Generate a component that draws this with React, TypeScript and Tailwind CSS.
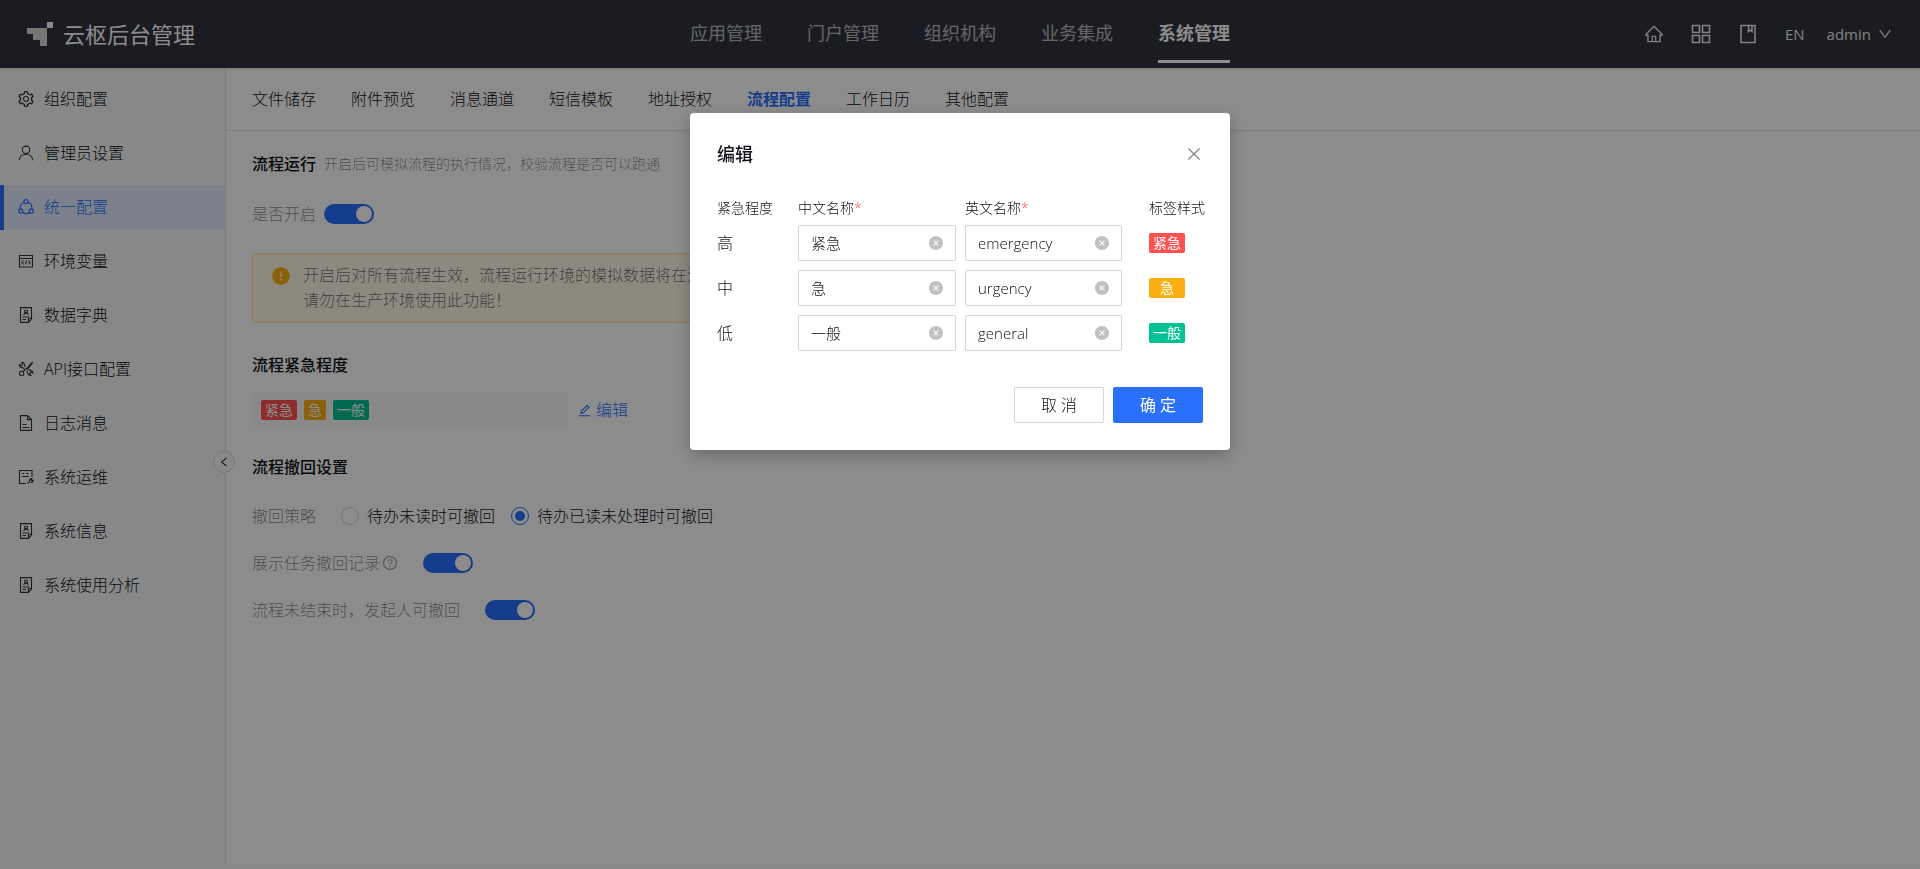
import React from "react";
import {
  AiOutlineSetting,
  AiOutlineHome,
  AiOutlineDown,
  AiOutlineLeft,
  AiOutlineEdit,
  AiOutlineQuestionCircle,
  AiOutlineClose,
  AiFillCloseCircle,
  AiFillExclamationCircle,
} from "react-icons/ai";

type IconProps = { className?: string };

const line = {
  fill: "none",
  stroke: "currentColor",
  strokeWidth: 1.1,
  viewBox: "0 0 16 16",
  "aria-hidden": true,
} as const;

const GearIcon = ({ className }: IconProps) => (
  <AiOutlineSetting className={className} viewBox="64 64 896 896" />
);

const UserIcon = ({ className }: IconProps) => (
  <svg {...line} className={className}>
    <circle cx="8" cy="4.8" r="3.7" />
    <path d="M1.3 15.2c.3-3.4 2.6-6 6.7-6s6.4 2.6 6.7 6" />
  </svg>
);

const NodesIcon = ({ className }: IconProps) => (
  <svg {...line} strokeWidth={1.2} className={className}>
    <circle cx="8" cy="2.7" r="2" />
    <circle cx="2.7" cy="12" r="2.1" />
    <circle cx="13.3" cy="12" r="2.1" />
    <path d="M6 3C3.4 4.2 1.9 6.8 2.1 9.9M10 3c2.600 1.200 4.100 3.800 3.900 6.900M4.500 13.200c2.100 1.900 4.900 1.900 7 0" />
  </svg>
);

const CodeWindowIcon = ({ className }: IconProps) => (
  <svg {...line} className={className}>
    <path d="M1.5 2.5h13V14h-13zM1.5 5.500h13M5.500 7.700L3.900 9.500l1.600 1.800M10.500 7.700l1.600 1.800-1.600 1.800M8.700 7.600L7.300 11.400" />
  </svg>
);

const DictIcon = ({ className }: IconProps) => (
  <svg {...line} className={className}>
    <path d="M2.500.6h11v11.500l-3 3.300h-8zM13.500 11.500h-3v3.800M4.500 10h7M4.500 12.500h3.500" />
    <circle cx="8" cy="4.500" r="1.500" />
    <path d="M5.800 8c.2-1.200 1-1.900 2.200-1.900s2 .7 2.200 1.900" />
  </svg>
);

const ToolsIcon = ({ className }: IconProps) => (
  <svg {...line} className={className}>
    <path d="M14.600.9L9 7.300 4.800 10.700M14.600 2L9.600 8" />
    <path d="M7 6.200L6.600 3.800A2.800 2.800 0 0 0 3.500 1.300l1.300 2-1.500 1.500-2-1.200A2.800 2.800 0 0 0 4.700 6.600L6.500 8M9 9.600l.6 2.200a2.800 2.800 0 0 0 3.300 2.700l-1.400-2 1.400-1.500 2 1.200a2.800 2.800 0 0 0-3.400-3l-1.800-.9" />
    <circle cx="3.600" cy="12.400" r="2.200" />
  </svg>
);

const FileIcon = ({ className }: IconProps) => (
  <svg {...line} className={className}>
    <path d="M2.500.6h7l4 4v10.800h-11zM9.500.6v4h4M4.500 9.500h4M4.500 12.500h7" />
  </svg>
);

const OpsIcon = ({ className }: IconProps) => (
  <svg {...line} className={className}>
    <path d="M8 14.500H1.500v-13H14V8M4 4.500h2M8 4.500h2.500M4 7.500h7" />
    <path d="M9.300 14.600l2.300-2.100c-.4-1.600.6-3 2.200-2.900l-.7 1.500 1 .9 1.200-.7c0 1.600-1.300 2.500-2.800 2.100" />
  </svg>
);

const GridIcon = ({ className }: IconProps) => (
  <svg {...line} strokeWidth={1.6} viewBox="0 0 20 20" className={className}>
    <path d="M1.500 1.500h7v7h-7zM11.500 1.500h7v7h-7zM1.500 11.500h7v7h-7zM11.500 11.500h7v7h-7z" />
  </svg>
);

const NotebookIcon = ({ className }: IconProps) => (
  <svg {...line} strokeWidth={1.6} viewBox="0 0 20 20" className={className}>
    <path d="M3 1.500h14v17H3zM10.500 1.500v6l1.800-1.500 1.700 1.500v-6" />
  </svg>
);

const Logo = () => (
  <svg viewBox="0 0 26 24" className="h-6 w-[26px]" fill="currentColor" aria-hidden="true">
    <path d="M0 6h20v18h-7v-6H6v-6H0z" opacity="0.8" />
    <path d="M20 0h6v6h-6z" />
  </svg>
);

const mainNav = ["应用管理", "门户管理", "组织机构", "业务集成", "系统管理"];

const sideNav: { label: string; icon: (p: IconProps) => React.ReactElement }[] = [
  { label: "组织配置", icon: GearIcon },
  { label: "管理员设置", icon: UserIcon },
  { label: "统一配置", icon: NodesIcon },
  { label: "环境变量", icon: CodeWindowIcon },
  { label: "数据字典", icon: DictIcon },
  { label: "API接口配置", icon: ToolsIcon },
  { label: "日志消息", icon: FileIcon },
  { label: "系统运维", icon: OpsIcon },
  { label: "系统信息", icon: DictIcon },
  { label: "系统使用分析", icon: DictIcon },
];

const tabs = ["文件储存", "附件预览", "消息通道", "短信模板", "地址授权", "流程配置", "工作日历", "其他配置"];

const levels = [
  { level: "高", zh: "紧急", en: "emergency", color: "bg-[#ff5250]" },
  { level: "中", zh: "急", en: "urgency", color: "bg-[#fcaf14]" },
  { level: "低", zh: "一般", en: "general", color: "bg-[#00c293]" },
];

function Switch({ label }: { label: string }) {
  return (
    <button
      type="button"
      role="switch"
      aria-checked="true"
      aria-label={label}
      className="flex h-5 w-[50px] shrink-0 items-center justify-end rounded-full bg-[#2970ff] px-0.5"
    >
      <span className="size-4 rounded-full bg-white shadow-sm" />
    </button>
  );
}

function Radio({ label, checked }: { label: string; checked?: boolean }) {
  return (
    <label className="flex items-center gap-2">
      <input
        type="radio"
        name="strategy"
        defaultChecked={checked}
        className="size-[18px] appearance-none rounded-full border border-[#d4d5d6] p-[3px] checked:border-[#2970ff] checked:bg-[#2970ff] checked:bg-clip-content"
      />
      {label}
    </label>
  );
}

function Header() {
  return (
    <header className="relative z-10 grid h-17 shrink-0 grid-cols-[1fr_auto_1fr] items-center bg-[#31333c] px-[27px] font-normal text-white shadow-sm">
      <div className="flex items-center gap-2.5">
        <Logo />
        <span className="text-[22px] leading-8">云枢后台管理</span>
      </div>
      <nav className="flex h-full gap-[45px] text-lg">
        {mainNav.map((item) =>
          item === "系统管理" ? (
            <a key={item} href="#" aria-current="page" className="flex h-[63px] items-center border-b-3 border-white pt-1.5 font-bold">
              {item}
            </a>
          ) : (
            <a key={item} href="#" className="flex h-[63px] items-center border-b-3 border-transparent pt-1.5 text-white/65">
              {item}
            </a>
          ),
        )}
      </nav>
      <div className="flex items-center justify-end text-[15px] text-white/90">
        <button type="button" aria-label="首页" className="mr-[27px]">
          <AiOutlineHome className="size-5" />
        </button>
        <button type="button" aria-label="应用" className="mr-[27px]">
          <GridIcon className="size-5" />
        </button>
        <button type="button" aria-label="文档" className="mr-[27px]">
          <NotebookIcon className="size-5" />
        </button>
        <button type="button" className="mr-[22px]">
          EN
        </button>
        <button type="button" className="flex items-center gap-1.5">
          admin
          <AiOutlineDown className="size-4" />
        </button>
      </div>
    </header>
  );
}

function Sidebar() {
  return (
    <aside className="relative w-[226px] shrink-0 border-r border-[#e0e1e3] bg-[#f7f8f9]">
      <nav className="flex flex-col gap-[9px] pt-[9px]">
        {sideNav.map(({ label, icon: Icon }) =>
          label === "统一配置" ? (
            <a
              key={label}
              href="#"
              aria-current="page"
              className="flex h-[45px] items-center gap-2.5 border-l-4 border-[#2970ff] bg-[#e2ecff] pb-0.5 pl-3.5 text-[#2970ff]"
            >
              <Icon className="size-4" />
              {label}
            </a>
          ) : (
            <a key={label} href="#" className="flex h-[45px] items-center gap-2.5 pb-0.5 pl-[18px]">
              <Icon className="size-4 text-[#33343c]" />
              {label}
            </a>
          ),
        )}
      </nav>
      <button
        type="button"
        aria-label="收起菜单"
        className="absolute -right-2.5 top-[383px] flex size-[22px] items-center justify-center rounded-full border border-[#d9dadc] bg-[#fafafa]"
      >
        <AiOutlineLeft className="size-3" />
      </button>
    </aside>
  );
}

function Settings() {
  return (
    <main className="grow">
      <nav className="flex h-[63px] items-center gap-[35px] border-b border-[#e0e1e3] px-[26px]">
        {tabs.map((tab) =>
          tab === "流程配置" ? (
            <a key={tab} href="#" aria-current="page" className="font-bold text-[#2970ff]">
              {tab}
            </a>
          ) : (
            <a key={tab} href="#">
              {tab}
            </a>
          ),
        )}
      </nav>
      <div className="px-[26px] pt-[21px] leading-6">
        <section>
          <div className="flex items-center gap-2">
            <h2 className="font-medium">流程运行</h2>
            <p className="text-sm leading-6 text-[#111218]/50">开启后可模拟流程的执行情况，校验流程是否可以跑通</p>
          </div>
          <div className="mt-[26px] flex items-center gap-2">
            <span className="text-[#111218]/50">是否开启</span>
            <Switch label="是否开启" />
          </div>
          <div className="mt-[27px] flex w-[640px] gap-3 rounded border border-[#ffe18f] bg-[#fffbe6] py-[9px] pl-[18px] leading-[25px] text-[#111218]/60">
            <AiFillExclamationCircle className="mt-[3px] size-5 shrink-0 text-[#fcaf14]" />
            <p>
              开启后对所有流程生效，流程运行环境的模拟数据将在流
              <br />
              请勿在生产环境使用此功能！
            </p>
          </div>
        </section>

        <section className="mt-[30px]">
          <h2 className="font-medium">流程紧急程度</h2>
          <div className="mt-[15px] flex items-center gap-2.5">
            <div className="flex h-9 w-[315px] items-center gap-[7px] rounded bg-[#fafafa] px-[9px]">
              {levels.map(({ zh, color }) => (
                <span key={zh} className={`${color} flex h-5 items-center rounded-xs px-1 text-sm font-normal text-white`}>
                  {zh}
                </span>
              ))}
            </div>
            <button type="button" className="flex items-center gap-1 text-[#2970ff]">
              <AiOutlineEdit className="size-[15px]" />
              编辑
            </button>
          </div>
        </section>

        <section className="mt-[27px]">
          <h2 className="font-medium">流程撤回设置</h2>
          <div className="mt-[25px] flex items-center gap-[25px]">
            <span className="text-[#111218]/50">撤回策略</span>
            <div className="flex gap-4">
              <Radio label="待办未读时可撤回" />
              <Radio label="待办已读未处理时可撤回" checked />
            </div>
          </div>
          <div className="mt-[23px] flex items-center gap-[25px]">
            <span className="flex items-center gap-0.5 text-[#111218]/50">
              展示任务撤回记录
              <AiOutlineQuestionCircle className="size-4 text-[#111218]/40" />
            </span>
            <Switch label="展示任务撤回记录" />
          </div>
          <div className="mt-[23px] flex items-center gap-[25px]">
            <span className="text-[#111218]/50">流程未结束时，发起人可撤回</span>
            <Switch label="流程未结束时，发起人可撤回" />
          </div>
        </section>
      </div>
    </main>
  );
}

function ClearableInput({ label, value }: { label: string; value: string }) {
  return (
    <div className="relative">
      <input
        aria-label={label}
        defaultValue={value}
        className="block h-9 w-full rounded-xs border border-[#d4d5d6] bg-white pl-3 pr-8 text-[15px] outline-none"
      />
      <button type="button" aria-label={`清除${label}`} className="absolute inset-y-0 right-3 flex items-center text-[#c0c1c3]">
        <AiFillCloseCircle className="size-4" />
      </button>
    </div>
  );
}

function EditDialog() {
  return (
    <div className="fixed inset-0 z-20 flex items-start justify-center bg-black/45 pt-[113px]">
      <div
        role="dialog"
        aria-modal="true"
        aria-labelledby="dialog-title"
        className="w-[540px] rounded bg-white p-[27px] shadow-[0_5px_16px_rgba(0,0,0,0.25)]"
      >
        <div className="flex h-7 items-center justify-between">
          <h2 id="dialog-title" className="text-lg font-medium">
            编辑
          </h2>
          <button type="button" aria-label="关闭" className="text-[#8a8b8f]">
            <AiOutlineClose className="size-[18px]" />
          </button>
        </div>
        <table className="mt-[27px] w-full table-fixed text-left">
          <thead>
            <tr className="h-[25px] whitespace-nowrap text-sm">
              <th className="w-[81px] p-0 font-light">紧急程度</th>
              <th className="w-[167px] p-0 font-light">
                中文名称<span className="text-[#ff5250]">*</span>
              </th>
              <th className="w-[184px] p-0 font-light">
                英文名称<span className="text-[#ff5250]">*</span>
              </th>
              <th className="p-0 font-light">标签样式</th>
            </tr>
          </thead>
          <tbody>
            {levels.map(({ level, zh, en, color }) => (
              <tr key={level} className="h-[45px]">
                <td>{level}</td>
                <td className="pr-[9px]">
                  <ClearableInput label={`${level}中文名称`} value={zh} />
                </td>
                <td className="pr-[27px]">
                  <ClearableInput label={`${level}英文名称`} value={en} />
                </td>
                <td>
                  <span className={`${color} flex h-5 w-9 items-center justify-center rounded-xs text-sm font-normal text-white`}>
                    {zh}
                  </span>
                </td>
              </tr>
            ))}
          </tbody>
        </table>
        <div className="mt-8 flex justify-end gap-[9px]">
          <button type="button" className="h-9 w-[90px] rounded-xs border border-[#d4d5d6] bg-white">
            取 消
          </button>
          <button type="button" className="h-9 w-[90px] rounded-xs bg-[#2970ff] font-normal text-white">
            确 定
          </button>
        </div>
      </div>
    </div>
  );
}

export default function App() {
  return (
    <div className="flex min-h-screen flex-col bg-white font-['Open_Sans','Noto_Sans_CJK_SC',sans-serif] text-base font-light text-[#111218]">
      <Header />
      <div className="flex grow">
        <Sidebar />
        <Settings />
      </div>
      <footer className="h-1 bg-[#fcfafc]" />
      <EditDialog />
    </div>
  );
}
